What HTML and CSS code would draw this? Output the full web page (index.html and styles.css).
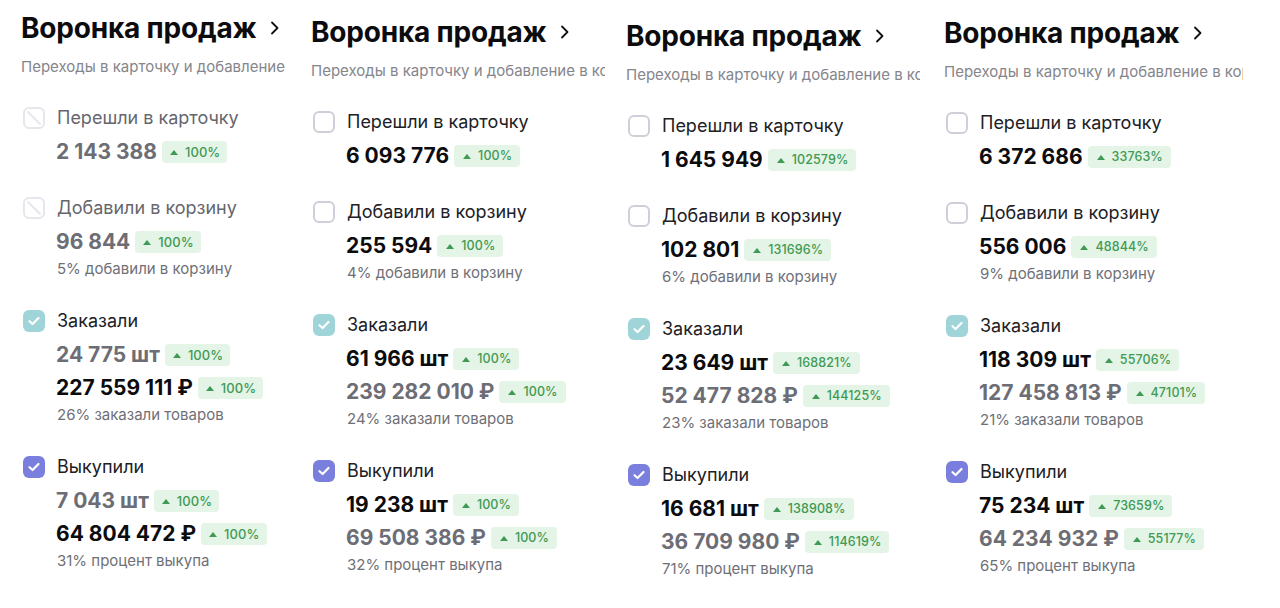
FILE: index.html
```html
<!DOCTYPE html>
<html lang="ru">
<head>
<meta charset="utf-8">
<link rel="stylesheet" href="styles.css">
</head>
<body>
<div class="board">

  <section class="panel p1">
    <h2 class="title">Воронка продаж <svg class="chev" viewBox="0 0 10 14"><path d="M2 1.5 L7.5 7 L2 12.5"/></svg></h2>
    <div class="subtitle">Переходы в карточку и добавление</div>
    <div class="row">
      <span class="cb cb-off"><svg viewBox="0 0 22 22"><path d="M5 5 L17 17"/></svg></span>
      <div class="label dim">Перешли в карточку</div>
      <div class="val grey">2 143 388 <span class="badge"><i class="tri"></i>100%</span></div>
    </div>
    <div class="row">
      <span class="cb cb-off"><svg viewBox="0 0 22 22"><path d="M5 5 L17 17"/></svg></span>
      <div class="label dim">Добавили в корзину</div>
      <div class="val grey">96 844 <span class="badge"><i class="tri"></i>100%</span></div>
      <div class="sub">5% добавили в корзину</div>
    </div>
    <div class="row">
      <span class="cb cb-teal"><svg viewBox="0 0 22 22"><path d="M6.5 11.2 L9.6 14 L15.5 8"/></svg></span>
      <div class="label">Заказали</div>
      <div class="val grey">24 775 шт <span class="badge"><i class="tri"></i>100%</span></div>
      <div class="val val2">227 559 111 ₽ <span class="badge"><i class="tri"></i>100%</span></div>
      <div class="sub">26% заказали товаров</div>
    </div>
    <div class="row">
      <span class="cb cb-violet"><svg viewBox="0 0 22 22"><path d="M6.5 11.2 L9.6 14 L15.5 8"/></svg></span>
      <div class="label">Выкупили</div>
      <div class="val grey">7 043 шт <span class="badge"><i class="tri"></i>100%</span></div>
      <div class="val val2">64 804 472 ₽ <span class="badge"><i class="tri"></i>100%</span></div>
      <div class="sub">31% процент выкупа</div>
    </div>
  </section>

  <section class="panel p2">
    <h2 class="title">Воронка продаж <svg class="chev" viewBox="0 0 10 14"><path d="M2 1.5 L7.5 7 L2 12.5"/></svg></h2>
    <div class="subtitle">Переходы в карточку и добавление в корзину</div>
    <div class="row">
      <span class="cb cb-empty"></span>
      <div class="label">Перешли в карточку</div>
      <div class="val">6 093 776 <span class="badge sm"><i class="tri"></i>100%</span></div>
    </div>
    <div class="row">
      <span class="cb cb-empty"></span>
      <div class="label">Добавили в корзину</div>
      <div class="val">255 594 <span class="badge sm"><i class="tri"></i>100%</span></div>
      <div class="sub">4% добавили в корзину</div>
    </div>
    <div class="row">
      <span class="cb cb-teal"><svg viewBox="0 0 22 22"><path d="M6.5 11.2 L9.6 14 L15.5 8"/></svg></span>
      <div class="label">Заказали</div>
      <div class="val">61 966 шт <span class="badge sm"><i class="tri"></i>100%</span></div>
      <div class="val val2 grey">239 282 010 ₽ <span class="badge sm"><i class="tri"></i>100%</span></div>
      <div class="sub">24% заказали товаров</div>
    </div>
    <div class="row">
      <span class="cb cb-violet"><svg viewBox="0 0 22 22"><path d="M6.5 11.2 L9.6 14 L15.5 8"/></svg></span>
      <div class="label">Выкупили</div>
      <div class="val">19 238 шт <span class="badge sm"><i class="tri"></i>100%</span></div>
      <div class="val val2 grey">69 508 386 ₽ <span class="badge sm"><i class="tri"></i>100%</span></div>
      <div class="sub">32% процент выкупа</div>
    </div>
  </section>

  <section class="panel p3">
    <h2 class="title">Воронка продаж <svg class="chev" viewBox="0 0 10 14"><path d="M2 1.5 L7.5 7 L2 12.5"/></svg></h2>
    <div class="subtitle">Переходы в карточку и добавление в корзину</div>
    <div class="row">
      <span class="cb cb-empty"></span>
      <div class="label">Перешли в карточку</div>
      <div class="val">1 645 949 <span class="badge sm"><i class="tri"></i>102579%</span></div>
    </div>
    <div class="row">
      <span class="cb cb-empty"></span>
      <div class="label">Добавили в корзину</div>
      <div class="val">102 801 <span class="badge sm"><i class="tri"></i>131696%</span></div>
      <div class="sub">6% добавили в корзину</div>
    </div>
    <div class="row">
      <span class="cb cb-teal"><svg viewBox="0 0 22 22"><path d="M6.5 11.2 L9.6 14 L15.5 8"/></svg></span>
      <div class="label">Заказали</div>
      <div class="val">23 649 шт <span class="badge sm"><i class="tri"></i>168821%</span></div>
      <div class="val val2 grey">52 477 828 ₽ <span class="badge sm"><i class="tri"></i>144125%</span></div>
      <div class="sub">23% заказали товаров</div>
    </div>
    <div class="row">
      <span class="cb cb-violet"><svg viewBox="0 0 22 22"><path d="M6.5 11.2 L9.6 14 L15.5 8"/></svg></span>
      <div class="label">Выкупили</div>
      <div class="val">16 681 шт <span class="badge sm"><i class="tri"></i>138908%</span></div>
      <div class="val val2 grey">36 709 980 ₽ <span class="badge sm"><i class="tri"></i>114619%</span></div>
      <div class="sub">71% процент выкупа</div>
    </div>
  </section>

  <section class="panel p4">
    <h2 class="title">Воронка продаж <svg class="chev" viewBox="0 0 10 14"><path d="M2 1.5 L7.5 7 L2 12.5"/></svg></h2>
    <div class="subtitle">Переходы в карточку и добавление в корзину</div>
    <div class="row">
      <span class="cb cb-empty"></span>
      <div class="label">Перешли в карточку</div>
      <div class="val">6 372 686 <span class="badge sm"><i class="tri"></i>33763%</span></div>
    </div>
    <div class="row">
      <span class="cb cb-empty"></span>
      <div class="label">Добавили в корзину</div>
      <div class="val">556 006 <span class="badge sm"><i class="tri"></i>48844%</span></div>
      <div class="sub">9% добавили в корзину</div>
    </div>
    <div class="row">
      <span class="cb cb-teal"><svg viewBox="0 0 22 22"><path d="M6.5 11.2 L9.6 14 L15.5 8"/></svg></span>
      <div class="label">Заказали</div>
      <div class="val">118 309 шт <span class="badge sm"><i class="tri"></i>55706%</span></div>
      <div class="val val2 grey">127 458 813 ₽ <span class="badge sm"><i class="tri"></i>47101%</span></div>
      <div class="sub">21% заказали товаров</div>
    </div>
    <div class="row">
      <span class="cb cb-violet"><svg viewBox="0 0 22 22"><path d="M6.5 11.2 L9.6 14 L15.5 8"/></svg></span>
      <div class="label">Выкупили</div>
      <div class="val">75 234 шт <span class="badge sm"><i class="tri"></i>73659%</span></div>
      <div class="val val2 grey">64 234 932 ₽ <span class="badge sm"><i class="tri"></i>55177%</span></div>
      <div class="sub">65% процент выкупа</div>
    </div>
  </section>

</div>
</body>
</html>
```

FILE: styles.css
```css
* { box-sizing: border-box; }
html, body {
  margin: 0;
  padding: 0;
  background: #ffffff;
}
body {
  font-family: Inter, "Noto Sans", "Liberation Sans", sans-serif;
  color: #111114;
  width: 1280px;
  height: 608px;
  overflow: hidden;
}
.board {
  display: flex;
  align-items: flex-start;
}
.panel {
  overflow: hidden;
  white-space: nowrap;
  flex: none;
}
.p1 { width: 289px; padding: 12px 0 0 21px; }
.p2 { width: 305px; margin-left: 11px; padding: 16px 0 0 11px; }
.p3 { width: 305px; margin-left: 10px; padding: 20px 0 0 11px; }
.p4 { width: 310px; margin-left: 13px; padding: 17px 0 0 11px; }

.title {
  margin: 0;
  font-size: 28px;
  line-height: 32px;
  font-weight: 700;
  letter-spacing: -0.2px;
  color: #0c0c0e;
  display: flex;
  align-items: center;
  gap: 13px;
}
.chev {
  width: 10px;
  height: 14px;
  fill: none;
  stroke: #111;
  stroke-width: 1.8;
  stroke-linecap: round;
  stroke-linejoin: round;
}
.subtitle {
  margin-top: 13px;
  font-size: 15px;
  line-height: 20px;
  color: #85858c;
}

.row {
  display: grid;
  grid-template-columns: 36px auto;
  margin-top: 30px;
}
.subtitle + .row { margin-top: 29px; }

.cb {
  grid-row: 1;
  grid-column: 1;
  align-self: center;
  margin-left: 2px;
  width: 22px;
  height: 22px;
  border-radius: 6px;
  display: block;
}
.cb svg { width: 22px; height: 22px; display: block; fill: none; }
.cb-off {
  border: 2px solid #e6e6ec;
}
.cb-off svg { margin: -2px; }
.cb-off svg path { stroke: #e6e6ec; stroke-width: 2; stroke-linecap: round; }
.cb-empty {
  border: 2px solid #cfcfd9;
}
.cb-teal { background: #9fd4d9; }
.cb-violet { background: #7a7fdd; }
.cb-teal svg path, .cb-violet svg path {
  stroke: #ffffff;
  stroke-width: 2.2;
  stroke-linecap: round;
  stroke-linejoin: round;
}

.label {
  grid-row: 1;
  grid-column: 2;
  font-size: 18px;
  line-height: 24px;
  color: #202025;
}
.label.dim { color: #66666e; }

.val {
  grid-column: 2;
  margin-top: 8px;
  margin-left: -1px;
  font-size: 21px;
  line-height: 28px;
  font-weight: 700;
  color: #0c0c0e;
  display: flex;
  align-items: center;
  gap: 5px;
}
.val.val2 { margin-top: 5px; }
.val.grey { color: #6d6d75; }

.badge {
  display: inline-flex;
  align-items: center;
  gap: 7px;
  height: 22px;
  padding: 0 7px 0 8px;
  border-radius: 4px;
  background: #e4f4e6;
  color: #3f9a55;
  font-size: 13px;
  font-weight: 500;
  letter-spacing: 0.1px;
}
.badge.sm { font-size: 12.5px; padding: 0 8px 0 9px; }
.tri {
  width: 0;
  height: 0;
  border-left: 4px solid transparent;
  border-right: 4px solid transparent;
  border-bottom: 5px solid #3f9a55;
  display: inline-block;
}

.sub {
  grid-column: 2;
  margin-top: 3px;
  font-size: 15px;
  line-height: 20px;
  color: #6f6f77;
}
```
